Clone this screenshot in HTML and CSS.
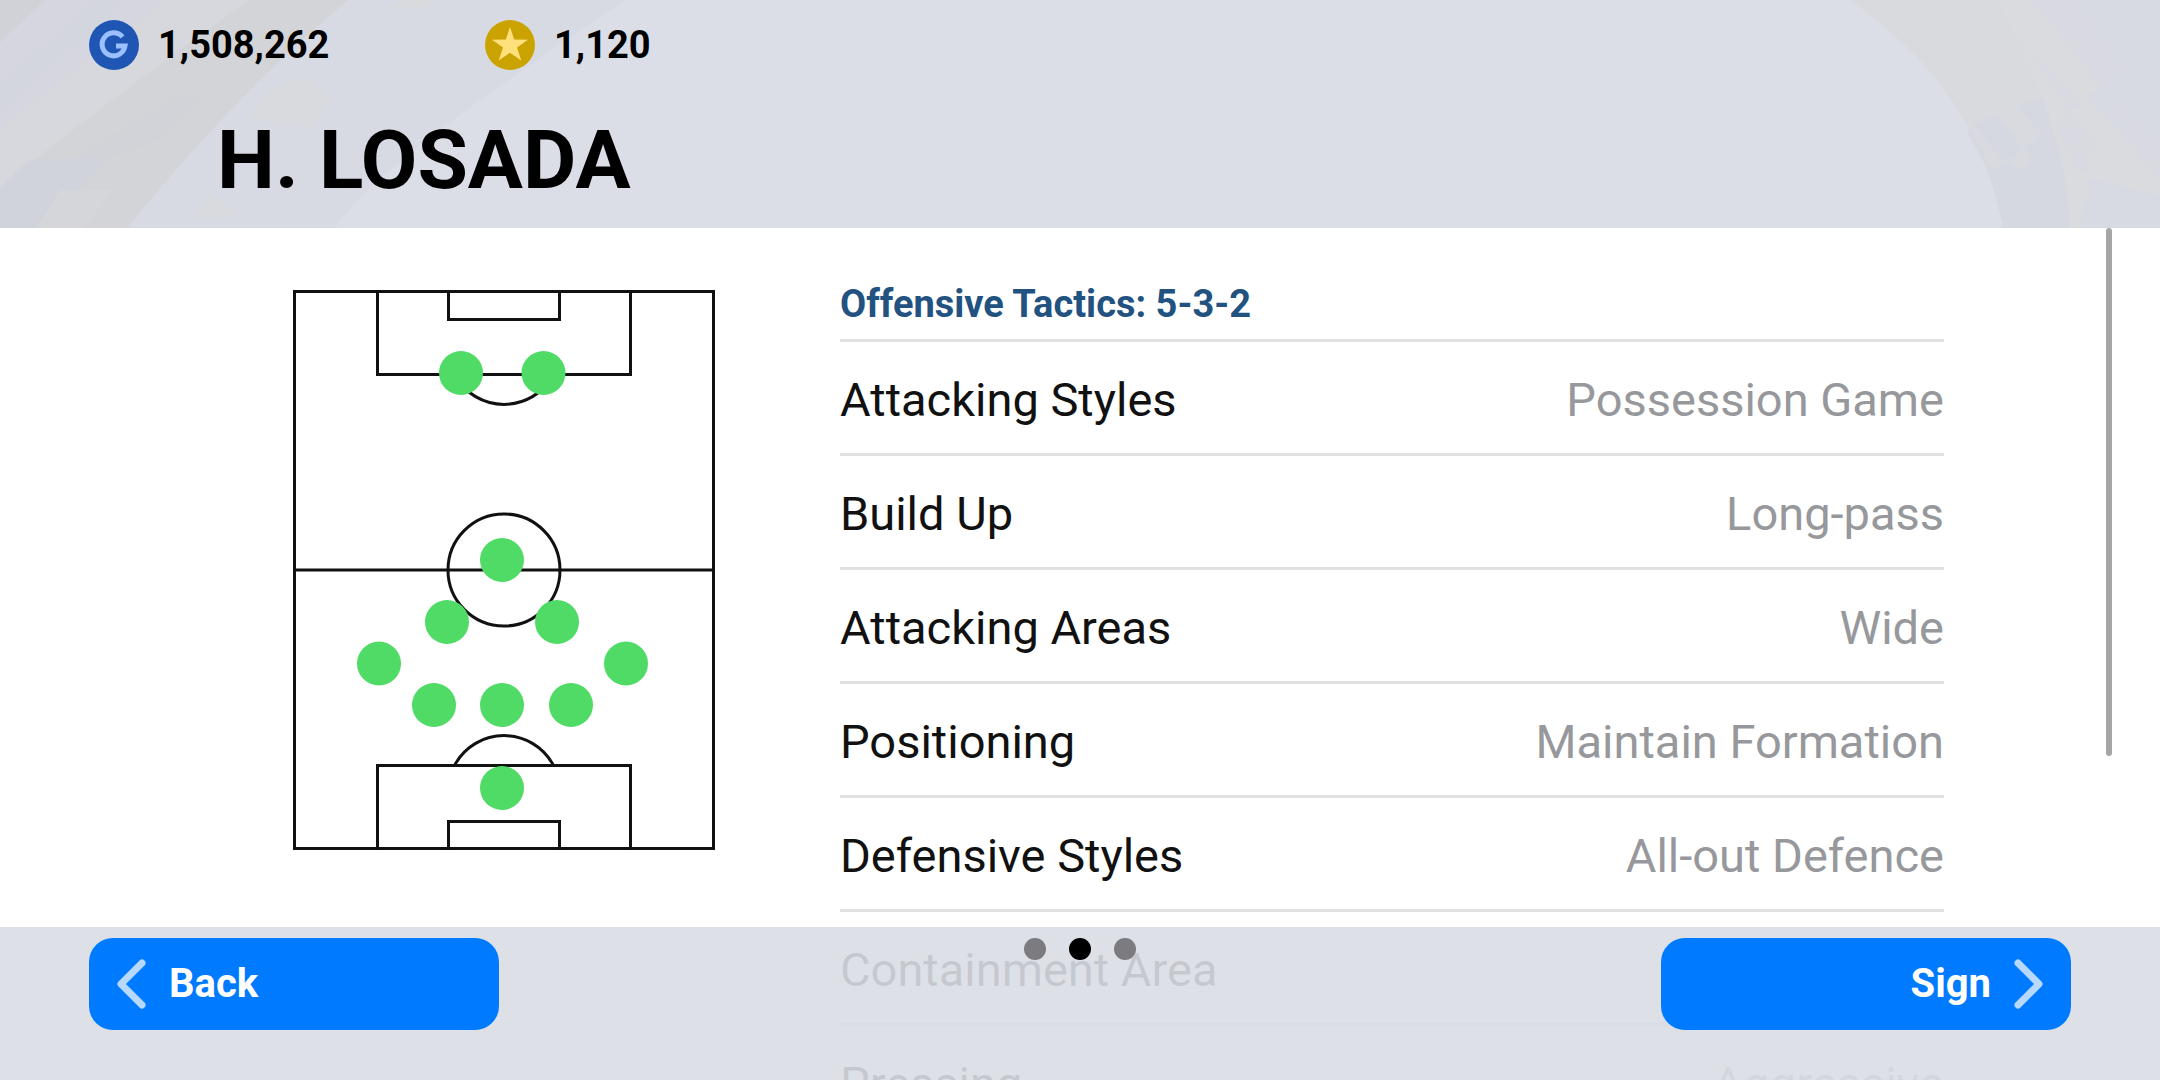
FILE: index.html
```html
<!DOCTYPE html>
<html lang="en">
<head>
<meta charset="utf-8">
<meta name="viewport" content="width=device-width, initial-scale=1">
<title>H. Losada – Manager</title>
<link rel="stylesheet" href="styles.css">
</head>
<body>
<div class="screen">
  <header class="header">
    <svg class="backdrop backdrop-left" viewBox="0 0 640 228" aria-hidden="true">
      <path fill="#d7dae2" d="M0 0H627C565 40 490 92 440 130C400 160 362 192 334 228H0Z"/>
      <path fill="#d3d4d8" d="M0 0H348C270 66 198 140 127 228H0Z"/>
      <path fill="#d7d8dd" d="M0 0H250C180 48 90 116 0 187Z"/>
      <path fill="#d5d6df" d="M0 0H165L0 128Z"/>
      <path fill="#d3d6df" d="M0 85L95 0H125L0 112Z"/>
      <path fill="#d1d2d7" d="M0 0H45L0 42Z"/>
      <path fill="#d0d3dc" d="M0 187L30 160L110 157L78 190L36 228H0Z"/>
      <path fill="#d1d3d9" d="M178 96H205L160 140L110 157H75Z"/>
      <path fill="#d5d6da" d="M60 190H115L84 228H36Z"/>
      <path fill="#d8dade" d="M304 76L330 98L310 128L250 118L270 90ZM410 0H440L415 10L385 6ZM210 194L235 215L195 220Z"/>
    </svg>
    <svg class="backdrop backdrop-right" viewBox="0 0 320 228" aria-hidden="true">
      <path fill="#d7dae3" d="M150 0H320V228H225Z"/>
      <path fill="#d9dade" d="M10 0C78 50 142 112 163 228H230C224 140 200 70 157 0Z"/>
      <path fill="#d5d8e0" d="M127 133L132 124L158 115L202 97C220 142 227 185 230 228H163C155 186 145 160 127 133Z"/>
      <path fill="#d8dadf" d="M129 126L158 115L176 105L204 132L184 148L190 160L182 171L170 160L160 165L152 171Z"/>
      <path fill="#d5d8e0" d="M133 124L158 115L182 147L174 158L162 160ZM176 106L202 97L208 122L202 134Z"/>
      <path fill="#dadbdf" d="M157 0H191L262 88L246 96L320 178V196L249 178L241 228H230C228 160 208 96 157 0Z"/>
      <path fill="#d9d9e2" d="M195 0H230L282 68L262 88ZM168 28L242 104L230 112L196 62ZM214 122L230 113L258 146L242 157L254 176L235 168ZM262 90L320 150V178Z"/>
    </svg>
    <div class="wallet">
      <div class="balance">
        <svg class="coin" viewBox="0 0 50 50" role="img" aria-label="GP">
          <circle cx="25" cy="25" r="25" fill="#1f56b3"/>
          <path d="M33.500 17A11.500 11.500 0 1 0 36 26H27" fill="none" stroke="#9cc0ff" stroke-width="5"/>
        </svg>
        <span>1,508,262</span>
      </div>
      <div class="balance">
        <svg class="coin" viewBox="0 0 50 50" role="img" aria-label="Coins">
          <circle cx="25" cy="25" r="25" fill="#cba300"/>
          <path d="M25 7L29.200 19.500L43 19.800L32 27.500L36.300 40.500L25 32.800L13.700 40.500L18 27.500L7 19.800L20.800 19.500Z" fill="#ffe07a"/>
        </svg>
        <span>1,120</span>
      </div>
    </div>
    <h1 class="name">H. LOSADA</h1>
  </header>

  <main class="content">
    <svg class="pitch" viewBox="293 290 422 560" role="img" aria-label="Formation 5-3-2">
      <g fill="none" stroke="#111" stroke-width="3">
        <path d="M294.500 291.500H713.500V848.500H294.500ZM294.500 570H713.500"/>
        <path d="M377.500 291.500V374.500H630.500V291.500M448.500 291.500V319.500H559.500V291.500"/>
        <path d="M377.500 848.500V765.500H630.500V848.500M448.500 848.500V821.500H559.500V848.500"/>
        <circle cx="504" cy="570" r="56"/>
        <path d="M455 375.500A56 56 0 0 0 553 375.500M455 764.500A56 56 0 0 1 553 764.500"/>
      </g>
      <g fill="#4fdb65">
        <circle cx="461" cy="373" r="22"/>
        <circle cx="543.500" cy="373" r="22"/>
        <circle cx="502" cy="560" r="22"/>
        <circle cx="447" cy="622" r="22"/>
        <circle cx="557" cy="622" r="22"/>
        <circle cx="379" cy="663.500" r="22"/>
        <circle cx="626" cy="663.500" r="22"/>
        <circle cx="434" cy="705" r="22"/>
        <circle cx="502" cy="705" r="22"/>
        <circle cx="571" cy="705" r="22"/>
        <circle cx="502" cy="788" r="22"/>
      </g>
    </svg>

    <table class="tactics">
      <caption>Offensive Tactics: 5-3-2</caption>
      <tbody>
        <tr><th scope="row">Attacking Styles</th><td>Possession Game</td></tr>
        <tr><th scope="row">Build Up</th><td>Long-pass</td></tr>
        <tr><th scope="row">Attacking Areas</th><td>Wide</td></tr>
        <tr><th scope="row">Positioning</th><td>Maintain Formation</td></tr>
        <tr><th scope="row">Defensive Styles</th><td>All-out Defence</td></tr>
        <tr><th scope="row">Containment Area</th><td></td></tr>
        <tr><th scope="row">Pressing</th><td>Aggressive</td></tr>
      </tbody>
    </table>
    <div class="scroll-thumb"></div>
  </main>

  <footer class="footer">
    <button class="action" type="button">
      <svg class="chevron" viewBox="0 0 30 52" aria-hidden="true"><path d="M26 5L5 26L26 47"/></svg>
      Back
    </button>
    <nav class="pages" aria-label="Pages">
      <button class="dot" type="button" aria-label="Page 1"></button>
      <button class="dot dot-current" type="button" aria-label="Page 2" aria-current="page"></button>
      <button class="dot" type="button" aria-label="Page 3"></button>
    </nav>
    <button class="action action-next" type="button">
      Sign
      <svg class="chevron" viewBox="0 0 30 52" aria-hidden="true"><path d="M4 5L25 26L4 47"/></svg>
    </button>
  </footer>
</div>
</body>
</html>
```
FILE: styles.css
```css
* {
  box-sizing: border-box;
}

body {
  margin: 0;
  background: #fff;
  color: #000;
  font-family: Roboto, "Liberation Sans", sans-serif;
}

.screen {
  position: relative;
  display: flex;
  flex-direction: column;
  height: 100vh;
  overflow: hidden;
}

.header {
  position: relative;
  flex: none;
  padding: 20px 89px 18px;
  background: #dbdee6;
}

.backdrop {
  position: absolute;
  top: 0;
  height: 100%;
}

.backdrop-left {
  left: 0;
}

.backdrop-right {
  right: 0;
}

.wallet {
  position: relative;
  display: grid;
  grid-template-columns: 396px auto;
  justify-content: start;
}

.balance {
  display: flex;
  align-items: center;
  gap: 19px;
  font-size: 38px;
  font-weight: 700;
  line-height: 50px;
}

.coin {
  width: 50px;
  height: 50px;
}

.name {
  position: relative;
  margin: 40px 0 0;
  padding-left: 128px;
  font-size: 82px;
  font-weight: 700;
  line-height: 100px;
}

.content {
  position: relative;
  flex: 1;
  min-height: 0;
  display: flex;
  align-items: flex-start;
  gap: 125px;
  padding: 46px 216px 0 293px;
  overflow: hidden;
}

.pitch {
  flex: none;
  width: 422px;
  height: 560px;
  margin-top: 16px;
}

.tactics {
  flex: 1;
  border-collapse: separate;
  border-spacing: 0;
  font-size: 47px;
  line-height: 60px;
}

.tactics caption {
  padding-bottom: 5px;
  border-bottom: 3px solid #e1e1e3;
  color: #22527f;
  font-size: 38px;
  font-weight: 700;
  text-align: left;
}

.tactics th,
.tactics td {
  height: 114px;
  padding: 4px 0 0;
  border-bottom: 3px solid #e1e1e3;
  font-weight: 400;
}

.tactics th {
  color: #111;
  text-align: left;
}

.tactics td {
  color: #97989c;
  text-align: right;
}

.scroll-thumb {
  position: absolute;
  top: 0;
  right: 48px;
  width: 6px;
  height: 62%;
  border-radius: 3px;
  background: #a6a6a6;
}

.footer {
  position: absolute;
  right: 0;
  bottom: 0;
  left: 0;
  display: flex;
  align-items: flex-start;
  justify-content: space-between;
  padding: 11px 89px 50px;
  background: rgb(218 221 229 / 90%);
}

.action {
  display: flex;
  align-items: center;
  gap: 23px;
  width: 410px;
  height: 92px;
  padding: 0 27px;
  border: 0;
  border-radius: 24px;
  background: #007aff;
  color: #fff;
  font: 700 40px/48px Roboto, "Liberation Sans", sans-serif;
}

.action-next {
  justify-content: flex-end;
}

.chevron {
  width: 30px;
  height: 52px;
  fill: none;
  stroke: #b8d9ff;
  stroke-width: 7;
  stroke-linecap: round;
  stroke-linejoin: round;
}

.pages {
  display: flex;
  gap: 23px;
}

.dot {
  width: 22px;
  height: 22px;
  padding: 0;
  border: 0;
  border-radius: 50%;
  background: #7c7b80;
}

.dot-current {
  background: #000;
}
```
